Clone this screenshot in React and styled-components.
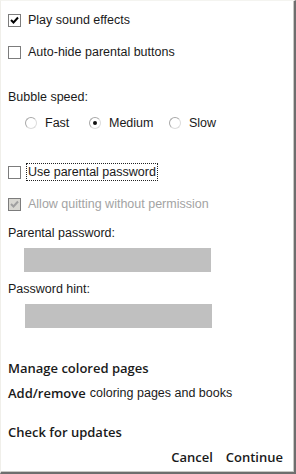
import React from 'react';
import styled, { createGlobalStyle } from 'styled-components';

const Global = createGlobalStyle`
body {
  margin: 0;
  background: #ffffff;
}
`

const Frame = styled.div`
width: 296px;
height: 474px;
box-sizing: border-box;
background: #ffffff;
border-left: 1px solid #f0efea;
border-top: 1px solid #f4f4f0;
border-right: 2px solid #6e6e6e;
border-bottom: 2px solid #6e6e6e;
box-shadow: inset -1px -1px 0 #c8c8c4;
padding: 9px 0 0 7px;
display: flex;
flex-direction: column;
font-family: "Liberation Sans", Arial, sans-serif;
font-size: 12.5px;
color: #1a1a1a;
`

const Row = styled.div`
display: flex;
align-items: center;
height: 20px;
margin-top: ${p => p.mt || 0}px;
padding-left: ${p => p.indent || 0}px;
color: ${p => p.disabled ? '#a3a3a3' : '#1a1a1a'};
`

const Box = styled.span`
width: 11px;
height: 11px;
border: 1px solid #7c7c7c;
background: ${p => p.disabled ? '#d9d8d2' : '#ffffff'};
display: flex;
align-items: center;
justify-content: center;
margin-right: 6px;
flex-shrink: 0;
`

const Label = styled.span`
padding: 1px 1px;
outline: ${p => p.focus ? '1px dotted #222' : 'none'};
outline-offset: 0;
`

const RadioItem = styled.span`
display: flex;
align-items: center;
width: ${p => p.w}px;
`

const Circle = styled.span`
width: 10px;
height: 10px;
border-radius: 50%;
border: 1px solid #a8a8a8;
border-right-color: #dcdcdc;
border-bottom-color: #dcdcdc;
display: flex;
align-items: center;
justify-content: center;
margin-right: 8px;
&::after {
  content: '';
  width: 4px;
  height: 4px;
  border-radius: 50%;
  background: ${p => p.on ? '#111' : 'transparent'};
}
`

const Field = styled.div`
width: 187px;
height: 24px;
background: #c0c0c0;
margin-top: 5px;
margin-left: ${p => p.ml}px;
`

const Heading = styled.div`
font-size: 13px;
font-weight: 600;
font-family: "Open Sans", "Liberation Sans", sans-serif;
height: 20px;
display: flex;
align-items: center;
margin-top: ${p => p.mt || 0}px;
`

const Light = styled.span`
font-weight: 400;
font-size: 12.5px;
font-family: "Liberation Sans", Arial, sans-serif;
margin-left: 4px;
`

const Buttons = styled.div`
display: flex;
justify-content: flex-end;
gap: 13px;
padding-right: 11px;
margin-top: 5px;
height: 20px;
align-items: center;
font-size: 13px;
font-weight: 600;
font-family: "Open Sans", "Liberation Sans", sans-serif;
`

const Check = ({ color }) => (
  <svg width="9" height="9" viewBox="0 0 9 9">
    <path d="M1 4 L3.5 6.5 L8 1.5" fill="none" stroke={color} strokeWidth="2" />
  </svg>
)

const CheckRow = ({ checked, disabled, focus, mt, children }) => (
  <Row mt={mt} disabled={disabled}>
    <Box disabled={disabled}>{checked && <Check color={disabled ? '#a0a0a0' : '#000'} />}</Box>
    <Label focus={focus}>{children}</Label>
  </Row>
)

export default function App() {
  return (
    <Frame>
      <Global />
      <CheckRow checked mt={0}>Play sound effects</CheckRow>
      <CheckRow mt={12}>Auto-hide parental buttons</CheckRow>
      <Row mt={25}>Bubble speed:</Row>
      <Row mt={6} indent={17}>
        <RadioItem w={64}><Circle />Fast</RadioItem>
        <RadioItem w={80}><Circle on />Medium</RadioItem>
        <RadioItem w={60}><Circle />Slow</RadioItem>
      </Row>
      <CheckRow mt={29} focus>Use parental password</CheckRow>
      <CheckRow mt={12} checked disabled>Allow quitting without permission</CheckRow>
      <Row mt={9}>Parental password:</Row>
      <Field ml={16} />
      <Row mt={7}>Password hint:</Row>
      <Field ml={17} />
      <Heading mt={30}>Manage colored pages</Heading>
      <Heading mt={5}>Add/remove<Light>coloring pages and books</Light></Heading>
      <Heading mt={19}>Check for updates</Heading>
      <Buttons><span>Cancel</span><span>Continue</span></Buttons>
    </Frame>
  );
}
